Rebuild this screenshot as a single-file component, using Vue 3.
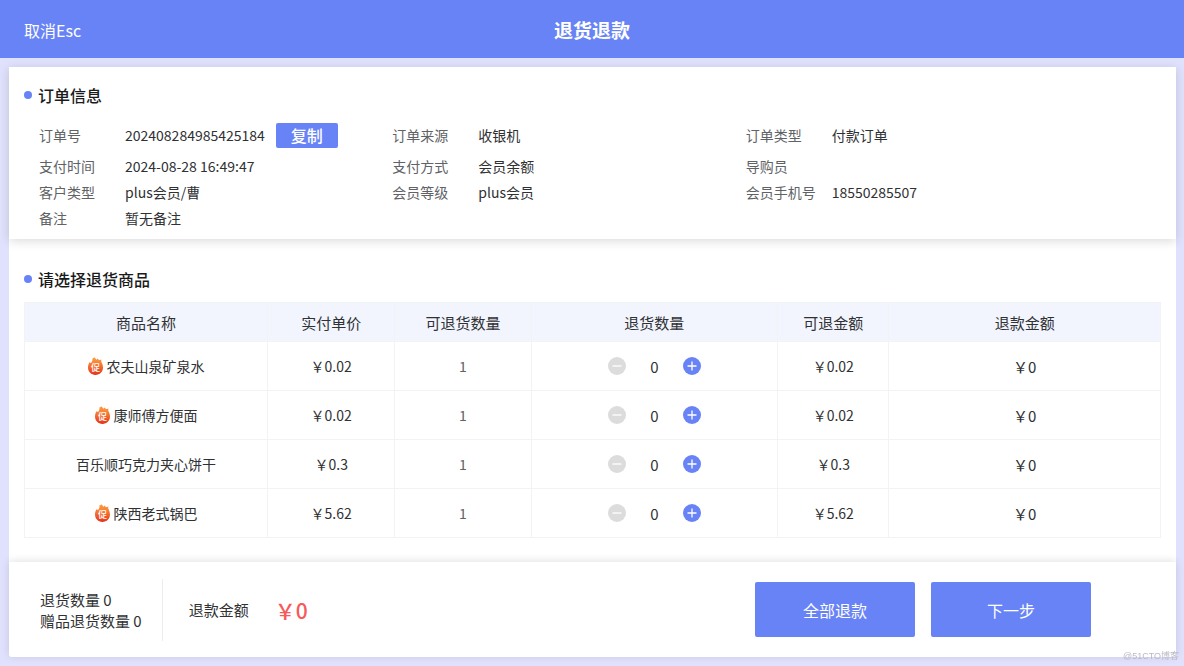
<script setup>
import { ref, computed } from 'vue'

const order = [
  { label: '订单号', value: '202408284985425184', copy: true },
  { label: '订单来源', value: '收银机' },
  { label: '订单类型', value: '付款订单' },
  { label: '支付时间', value: '2024-08-28 16:49:47' },
  { label: '支付方式', value: '会员余额' },
  { label: '导购员', value: '' },
  { label: '客户类型', value: 'plus会员/曹' },
  { label: '会员等级', value: 'plus会员' },
  { label: '会员手机号', value: '18550285507' },
  { label: '备注', value: '暂无备注' }
]

const columns = ['商品名称', '实付单价', '可退货数量', '退货数量', '可退金额', '退款金额']

const goods = ref([
  { name: '农夫山泉矿泉水', promo: true, price: 0.02, max: 1, qty: 0 },
  { name: '康师傅方便面', promo: true, price: 0.02, max: 1, qty: 0 },
  { name: '百乐顺巧克力夹心饼干', promo: false, price: 0.3, max: 1, qty: 0 },
  { name: '陕西老式锅巴', promo: true, price: 5.62, max: 1, qty: 0 }
])

const money = (n) => '￥' + Number(n.toFixed(2))
const totalQty = computed(() => goods.value.reduce((s, g) => s + g.qty, 0))
const totalAmount = computed(() => goods.value.reduce((s, g) => s + g.qty * g.price, 0))

function refundAll() {
  goods.value.forEach((g) => { g.qty = g.max })
}
function copyNo(text) {
  navigator.clipboard?.writeText(text)
}
</script>

<template>
  <div class="page">
    <header class="topbar">
      <button type="button" class="cancel">取消Esc</button>
      <h1>退货退款</h1>
    </header>

    <main class="panel">
      <section class="info">
        <h2>订单信息</h2>
        <dl class="fields">
          <div v-for="f in order" :key="f.label" class="field">
            <dt>{{ f.label }}</dt>
            <dd>
              {{ f.value }}
              <button v-if="f.copy" type="button" class="copy" @click="copyNo(f.value)">复制</button>
            </dd>
          </div>
        </dl>
      </section>

      <section class="goods">
        <h2>请选择退货商品</h2>
        <table>
          <colgroup>
            <col class="c-name"><col class="c-price"><col class="c-max"><col class="c-qty"><col class="c-able"><col>
          </colgroup>
          <thead>
            <tr><th v-for="c in columns" :key="c" scope="col">{{ c }}</th></tr>
          </thead>
          <tbody>
            <tr v-for="g in goods" :key="g.name">
              <td>
                <div class="name">
                  <svg v-if="g.promo" class="flame" viewBox="0 0 15 18" aria-hidden="true">
                    <defs>
                      <linearGradient id="fire" x1="0" y1="0" x2="0" y2="1">
                        <stop offset="0" stop-color="#fba143" />
                        <stop offset="0.5" stop-color="#f4702f" />
                        <stop offset="1" stop-color="#e6301a" />
                      </linearGradient>
                    </defs>
                    <path fill="url(#fire)" d="M6.4 0.2C7.2 1 8 1.7 8.4 2.7L9.6 1.6C10.1 2.2 10.6 2.7 10.9 3.3L13.4 2.4C12.9 4.2 13.5 5.2 14.2 6.7C14.8 8 15 9.2 15 10.6C15 14.8 11.7 18 7.5 18S0 14.8 0 10.6C0 8.4 0.6 6.4 1.8 4.9C2.1 5.5 2.5 5.8 3 6C4.6 4.6 4.5 2.6 4.5 1.3C5.2 1.4 5.9 1 6.4 0.2Z" />
                    <text x="7.5" y="14" text-anchor="middle">促</text>
                  </svg>
                  <span>{{ g.name }}</span>
                </div>
              </td>
              <td>{{ money(g.price) }}</td>
              <td class="max">{{ g.max }}</td>
              <td>
                <div class="stepper">
                  <button type="button" aria-label="减少" :disabled="g.qty === 0" @click="g.qty--">
                    <svg viewBox="0 0 18 18"><path d="M4.5 9h9" /></svg>
                  </button>
                  <output>{{ g.qty }}</output>
                  <button type="button" aria-label="增加" :disabled="g.qty >= g.max" @click="g.qty++">
                    <svg viewBox="0 0 18 18"><path d="M4.5 9h9M9 4.5v9" /></svg>
                  </button>
                </div>
              </td>
              <td>{{ money(g.price * g.max) }}</td>
              <td class="refund">{{ money(g.price * g.qty) }}</td>
            </tr>
          </tbody>
        </table>
      </section>

      <footer class="bottom">
        <div class="counts">
          <p>退货数量 {{ totalQty }}</p>
          <p>赠品退货数量 0</p>
        </div>
        <div class="sum">
          <span>退款金额</span>
          <strong>{{ money(totalAmount) }}</strong>
        </div>
        <div class="actions">
          <button type="button" @click="refundAll">全部退款</button>
          <button type="button">下一步</button>
        </div>
      </footer>
    </main>
    <div class="watermark">@51CTO博客</div>
  </div>
</template>

<style>
body {
  background: #e0e1fc;
}
</style>

<style scoped>
.page {
  min-height: 100vh;
  display: flex;
  flex-direction: column;
  font-family: "Noto Sans CJK SC", "Noto Sans", sans-serif;
  font-size: 14px;
  color: #303133;
  background: #e0e1fc;
}
.page * {
  box-sizing: border-box;
}
button {
  font-family: inherit;
  border: 0;
  padding: 0;
  color: #fff;
  background: #6883f5;
  cursor: pointer;
}
h1, h2, p, dl, dd {
  margin: 0;
}
.topbar {
  display: grid;
  grid-template-columns: 1fr auto 1fr;
  align-items: center;
  height: 58px;
  padding: 2px 24px 0;
  color: #fff;
  background: #6883f5;
}
.cancel {
  justify-self: start;
  font-size: 16px;
  line-height: 24px;
}
h1 {
  font-size: 19px;
  line-height: 28px;
  font-weight: 700;
}
.panel {
  flex: 1;
  display: flex;
  flex-direction: column;
  margin: 9px 8px 9px 9px;
  background: #fff;
  border-radius: 0 0 3px 3px;
}
h2 {
  display: flex;
  align-items: center;
  gap: 6px;
  font-size: 16px;
  line-height: 24px;
  font-weight: 500;
  color: #1a1a1a;
}
h2::before {
  content: "";
  width: 8px;
  height: 8px;
  border-radius: 50%;
  background: #6883f5;
}
.info {
  position: relative;
  padding: 16px 15px 8px;
  background: #fff;
  box-shadow: 0 2px 10px rgba(0, 0, 0, 0.15);
}
.fields {
  display: grid;
  grid-template-columns: repeat(3, 1fr);
  margin: 12px 62px 0 15px;
  line-height: 26px;
}
.field {
  display: flex;
}
.field:nth-child(-n + 3) {
  padding: 3px 0 5px;
}
dt {
  width: 86px;
  color: #606266;
}
dd {
  display: flex;
  align-items: center;
  gap: 11px;
  height: 26px;
  white-space: nowrap;
}
.copy {
  width: 62px;
  height: 25px;
  border-radius: 2px;
  font-size: 16px;
  line-height: 25px;
  font-weight: 500;
}
.goods {
  flex: 1;
  padding: 28px 15px 24px;
}
table {
  width: 100%;
  margin-top: 11px;
  table-layout: fixed;
  border-collapse: collapse;
  text-align: center;
}
.c-name { width: 21.4%; }
.c-price { width: 11.2%; }
.c-max { width: 12%; }
.c-qty { width: 21.7%; }
.c-able { width: 9.8%; }
th, td {
  padding: 0;
  border: 1px solid #f2f3f5;
}
th {
  height: 39px;
  font-size: 15px;
  font-weight: 400;
  background: #f2f5fe;
}
td {
  height: 49px;
}
.max {
  color: #606266;
}
.refund {
  font-size: 15px;
}
.name {
  display: flex;
  align-items: center;
  justify-content: center;
  gap: 4px;
}
.flame {
  width: 15px;
  height: 18px;
}
.flame text {
  font-size: 9px;
  font-weight: 500;
  fill: #fff;
}
.stepper {
  display: flex;
  align-items: center;
  justify-content: center;
}
.stepper button {
  width: 18px;
  height: 18px;
  border-radius: 50%;
}
.stepper button:disabled {
  background: #dcdcdc;
}
.stepper svg {
  display: block;
  fill: none;
  stroke: #fff;
  stroke-width: 1.3;
}
.stepper output {
  width: 57px;
  font-size: 15px;
}
.bottom {
  position: relative;
  display: flex;
  align-items: center;
  height: 95px;
  padding: 0 85px 0 31px;
  font-size: 15px;
  background: #fff;
  border-radius: 0 0 3px 3px;
  box-shadow: 0 -1px 8px rgba(0, 0, 0, 0.12);
}
.counts {
  display: flex;
  flex-direction: column;
  justify-content: center;
  height: 62px;
  padding-right: 20px;
  line-height: 21px;
  border-right: 1px solid #ebedf0;
}
.sum {
  display: flex;
  align-items: center;
  gap: 26px;
  padding-left: 26px;
}
.sum strong {
  font-size: 21px;
  font-weight: 500;
  color: #f75a5a;
}
.actions {
  display: flex;
  gap: 16px;
  margin-left: auto;
}
.actions button {
  width: 160px;
  height: 55px;
  border-radius: 2px;
  font-size: 16px;
}
.watermark {
  position: fixed;
  right: 5px;
  bottom: 3px;
  font-family: "Liberation Sans", "Noto Sans CJK SC", sans-serif;
  font-size: 9px;
  line-height: 14px;
  color: #b9b9c4;
}
</style>
